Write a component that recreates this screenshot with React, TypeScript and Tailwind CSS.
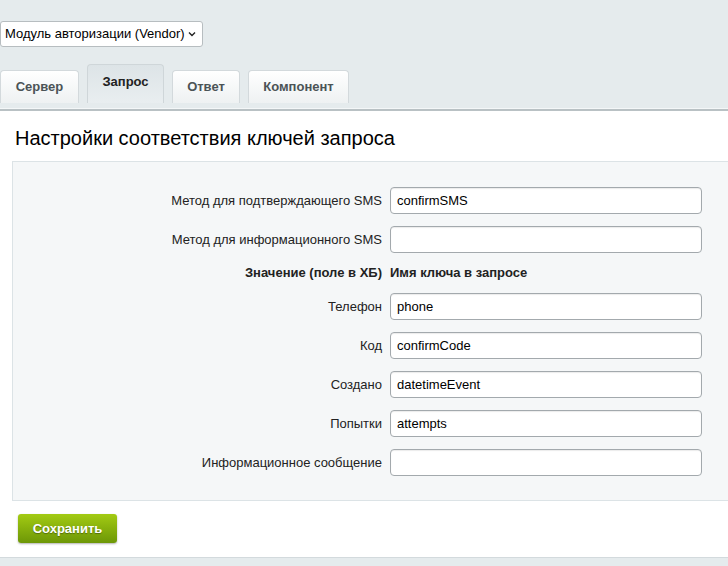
import React from 'react';

const tabs = [
  { id: 'server', label: 'Сервер', w: 'w-[79px]' },
  { id: 'request', label: 'Запрос', w: 'w-[77px]' },
  { id: 'response', label: 'Ответ', w: 'w-[68px]' },
  { id: 'component', label: 'Компонент', w: 'w-[101px]' },
];

const methodRows = [
  { label: 'Метод для подтверждающего SMS', value: 'confirmSMS' },
  { label: 'Метод для информационного SMS', value: '' },
];

const keyRows = [
  { label: 'Телефон', value: 'phone' },
  { label: 'Код', value: 'confirmCode' },
  { label: 'Создано', value: 'datetimeEvent' },
  { label: 'Попытки', value: 'attempts' },
  { label: 'Информационное сообщение', value: '' },
];

function FieldRow({ label, value }: { label: string; value: string }) {
  return (
    <div className="flex items-center h-[39px]">
      <label className="w-[377px] pr-2 text-right text-[13px] text-[#222]">{label}</label>
      <input
        type="text"
        defaultValue={value}
        className="w-[312px] h-[27px] px-[6px] bg-white border border-[#a3a9ad] rounded-[4px] text-[13px] text-black focus:outline-none shadow-[inset_0_1px_1px_rgba(0,0,0,0.08)]"
      />
    </div>
  );
}

export default function App() {
  const active = 'request';

  return (
    <div className="w-[728px] min-h-[566px] bg-[#e5ebed] font-['Liberation_Sans',Arial,sans-serif]">
      {/* Module select */}
      <div className="pt-[21px]">
        <div className="w-[203px] h-[26px] bg-white border border-[#b7bdc0] rounded-[3px] flex items-center justify-between pl-[4px] pr-[5px] text-[13px] text-black">
          <span>Модуль авторизации (Vendor)</span>
          <svg width="10" height="10" viewBox="0 0 10 10" fill="none">
            <path d="M2 3.5 L5 6.5 L8 3.5" stroke="#222" strokeWidth="1.4" />
          </svg>
        </div>
      </div>

      {/* Tabs */}
      <div className="flex items-end gap-2 mt-[17px] h-[39px]">
        {tabs.map(t => (
          <div
            key={t.id}
            className={`${t.w} flex items-center justify-center border border-b-0 rounded-t-[4px] text-[13px] font-bold ${
              t.id === active
                ? 'h-[39px] pb-[5px] bg-gradient-to-b from-[#dde4e7] to-[#e9eef0] border-[#cfd6d9] text-[#222]'
                : 'h-[33px] bg-gradient-to-b from-white to-[#eef1f2] border-[#d3d9dc] text-[#4b5356]'
            }`}
          >
            {t.label}
          </div>
        ))}
      </div>

      {/* Content */}
      <div className="mt-[5px] border-t border-[#f4f7f8]">
        <div className="border-t-2 border-[#b9c1c4] bg-white pb-[14px]">
          <h1 className="px-[15px] pt-[15px] pb-[11px] text-[20px] text-black leading-[24px]">
            Настройки соответствия ключей запроса
          </h1>
          <div className="ml-[12px] bg-[#f5f7f8] border-y border-l border-[#dce3e6] pt-[19px] pb-[18px]">
            {methodRows.map(r => (
              <FieldRow key={r.label} {...r} />
            ))}
            <div className="flex items-center h-[28px] text-[13px] font-bold text-[#222]">
              <span className="w-[377px] pr-2 text-right">Значение (поле в ХБ)</span>
              <span>Имя ключа в запросе</span>
            </div>
            {keyRows.map(r => (
              <FieldRow key={r.label} {...r} />
            ))}
          </div>
          <div className="pl-[18px] pt-[13px]">
            <button className="w-[99px] h-[29px] rounded-[3px] bg-gradient-to-b from-[#a3cb13] to-[#6d9707] text-white font-bold text-[13px] [text-shadow:0_1px_1px_rgba(0,0,0,0.35)] shadow-[0_1px_2px_rgba(0,0,0,0.3)]">
              Сохранить
            </button>
          </div>
        </div>
        <div className="h-[1px] bg-[#d3dadd]" />
      </div>
    </div>
  );
}
